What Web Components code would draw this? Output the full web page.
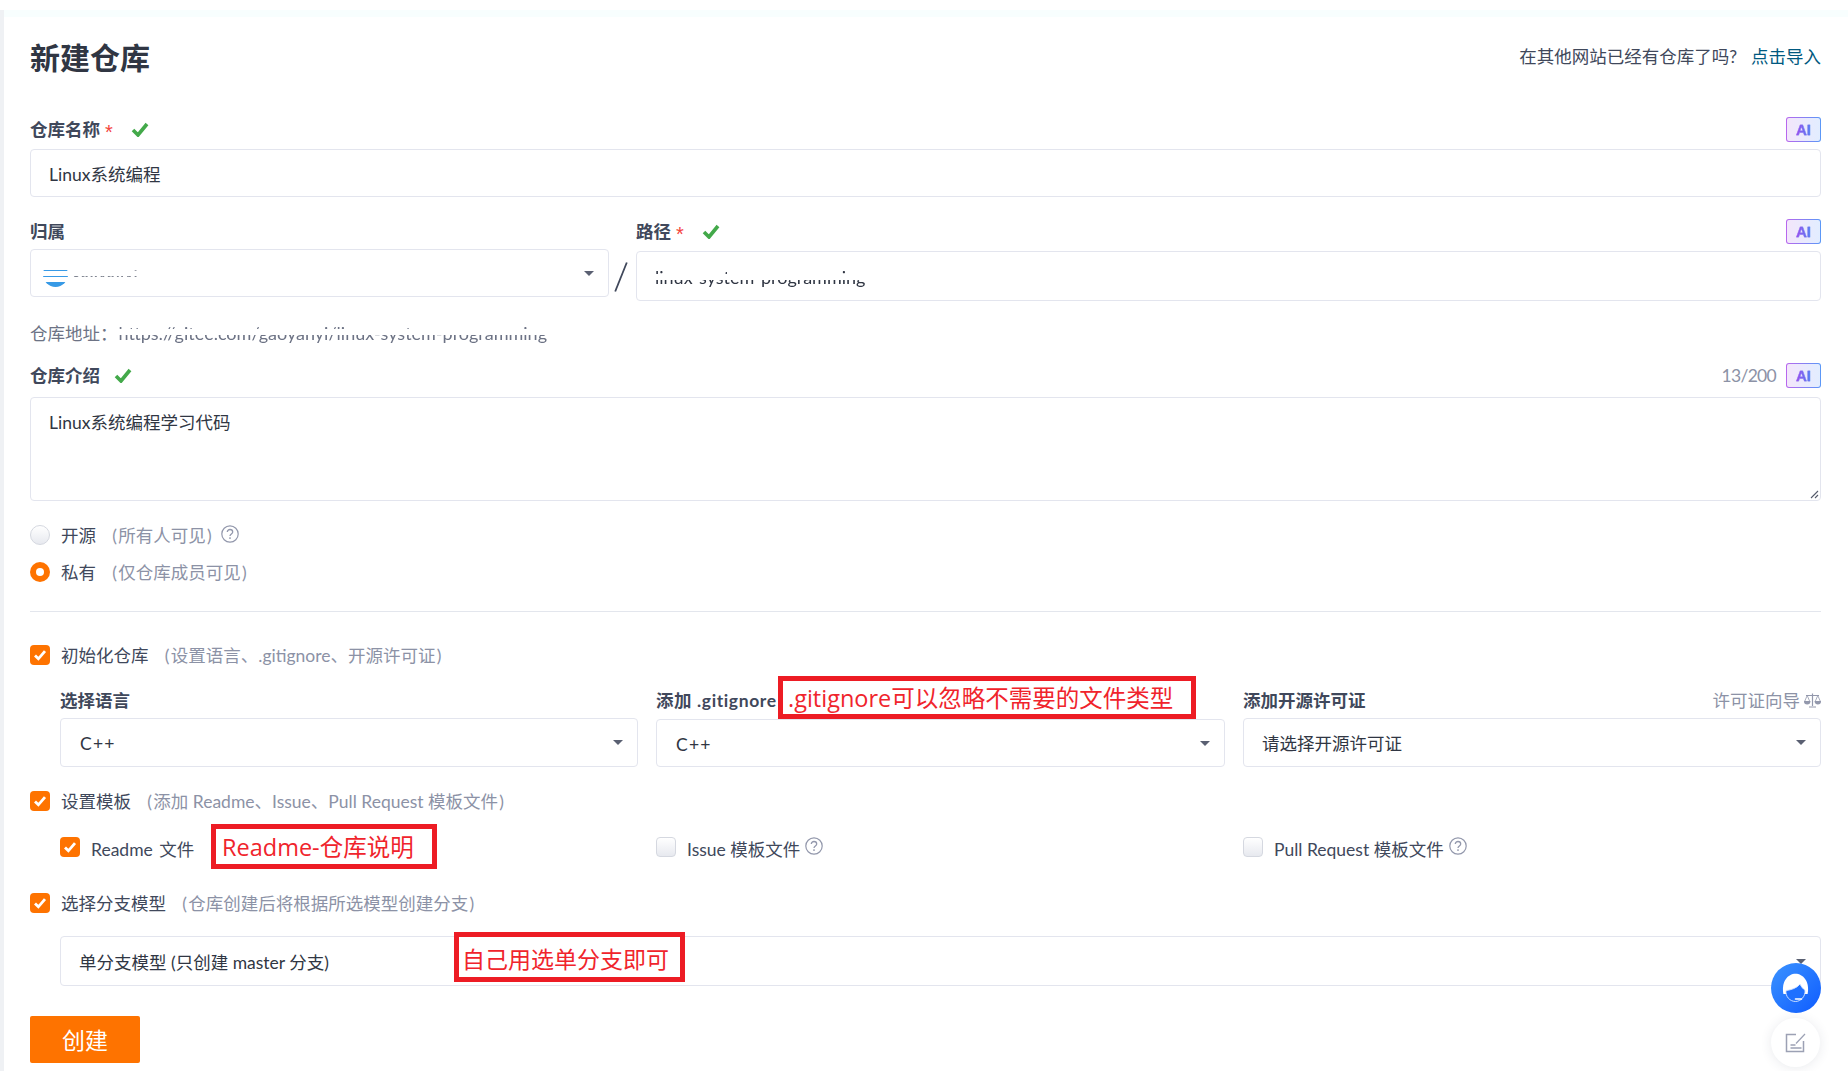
<!DOCTYPE html>
<html lang="zh-CN">
<head>
<meta charset="utf-8">
<title>新建仓库</title>
<style>
  html, body { margin: 0; background: #fff; }
  body { font: 17.5px/25px Lato, "Noto Sans CJK SC", "Noto Sans", sans-serif; color: #40485b; overflow: hidden; }
</style>
</head>
<body>
<app-shell>
  <new-repo-form></new-repo-form>
  <note-box style="left:778px;top:676px;width:418px;height:43px;font-size:23.5px;padding-left:5px">.gitignore可以忽略不需要的文件类型</note-box>
  <note-box style="left:211px;top:824px;width:226px;height:45px;font-size:23.5px">Readme-仓库说明</note-box>
  <note-box style="left:454px;top:932px;width:231px;height:50px;padding:3px 0 0 3px">自己用选单分支即可</note-box>
  <float-tools></float-tools>
</app-shell>

<script>
const CHECK_ICON = `<svg width="18" height="15" viewBox="0 0 18 15"><path d="M2 8l5 5 9-11" fill="none" stroke="#43a94a" stroke-width="3.6"/></svg>`;
const ARROW_ICON = `<svg width="10" height="5" viewBox="0 0 10 5"><path d="M0 0h10L5 5z" fill="#5a6072"/></svg>`;

class appShell extends HTMLElement {
  constructor() {
    super();
    this.shadowDOM = this.attachShadow({ mode: 'open' });
  }

  connectedCallback() {
    this.shadowDOM.innerHTML = `
    <style>
    :host { display: block; position: relative; height: 1071px; overflow: hidden; }
    .top { height: 10px; background: #fff; }
    .wrap { display: flex; height: 1061px; }
    .side { width: 4px; background: #eff1f4; }
    .main { flex: 1; min-width: 0; }
    .mint { height: 7px; background: #f8fefe; }
    .body { padding: 0 27px 0 26px; }
    </style>
    <div class="top"></div>
    <div class="wrap">
      <div class="side"></div>
      <div class="main">
        <div class="mint"></div>
        <div class="body"><slot></slot></div>
      </div>
    </div>`;
  }
}

class aiBadge extends HTMLElement {
  constructor() {
    super();
    this.shadowDOM = this.attachShadow({ mode: 'open' });
  }

  connectedCallback() {
    this.shadowDOM.innerHTML = `
    <style>
    :host { display: block; box-sizing: border-box; width: 35px; height: 25px; border: 1px solid transparent; border-radius: 3px;
      background: linear-gradient(90deg, #f3e6fb, #e2edff) padding-box, linear-gradient(90deg, #b967ee, #5a98f7) border-box; }
    div { display: flex; align-items: center; justify-content: center; height: 23px; }
    span { font: 700 15px/23px "Liberation Sans", sans-serif; -webkit-text-stroke: .3px #7d6cf0;
      background: linear-gradient(90deg, #a04cf0, #4a84f2); -webkit-background-clip: text; background-clip: text; color: transparent; }
    </style>
    <div><span>AI</span></div>`;
  }
}

class fieldLabel extends HTMLElement {
  constructor() {
    super();
    this.shadowDOM = this.attachShadow({ mode: 'open' });
  }

  connectedCallback() {
    const star = this.hasAttribute('required');
    this.shadowDOM.innerHTML = `
    <style>
    :host { display: flex; align-items: center; justify-content: space-between; height: 25px; }
    .left { display: flex; align-items: center; font-weight: 700; color: #40485b; }
    .star { position: relative; top: 3px; margin-left: 5px; color: #f4433c; font: 400 20px/25px "Liberation Sans", sans-serif; }
    svg { margin-left: ${star ? 18 : 14}px; }
    .end { display: flex; align-items: center; gap: 10px; }
    </style>
    <div class="left"><slot></slot>${star ? '<span class="star">*</span>' : ''}${this.hasAttribute('ok') ? CHECK_ICON : ''}</div>
    <div class="end"><slot name="end"></slot></div>`;
  }
}

class textBox extends HTMLElement {
  constructor() {
    super();
    this.shadowDOM = this.attachShadow({ mode: 'open' });
  }

  connectedCallback() {
    const select = this.hasAttribute('select');
    const multi = this.hasAttribute('multi');
    this.shadowDOM.innerHTML = `
    <style>
    :host { display: flex; position: relative; box-sizing: border-box; height: 48px; padding: ${multi ? '11px' : '0'} 14px 0 18px;
      align-items: ${multi ? 'flex-start' : 'center'}; justify-content: space-between;
      border: 1px solid #e3e5ee; border-radius: 4px; background: #fff; color: #303643; }
    .value { position: relative; top: 1px; }
    .grip { position: absolute; right: 1px; bottom: 1px; }
    </style>
    <div class="value"><slot></slot></div>
    ${select ? ARROW_ICON : ''}
    ${multi ? '<svg class="grip" width="9" height="9" viewBox="0 0 9 9"><path d="M1 8l7-7M5 8l3-3" stroke="#555b6b" stroke-width="1.1"/></svg>' : ''}`;
  }
}

class cutText extends HTMLElement {
  constructor() {
    super();
    this.shadowDOM = this.attachShadow({ mode: 'open' });
  }

  connectedCallback() {
    // the reference has these values smeared out in bands: a is the thin band, b the lower part
    const [a1, a2, b1, b2] = (this.getAttribute('bands') || '4,8,14,25').split(',');
    const mask = `linear-gradient(#0000 ${a1}px, #000 ${a1}px, #000 ${a2}px, #0000 ${a2}px, #0000 ${b1}px, #000 ${b1}px, #000 ${b2}px, #0000 ${b2}px)`;
    const line = this.getAttribute('line') || 25;
    this.shadowDOM.innerHTML = `
    <style>
    :host { display: inline-block; font-size: 18px; line-height: ${line}px; -webkit-mask-image: ${mask}; mask-image: ${mask}; }
    </style>
    <slot></slot>`;
  }
}

class ownerValue extends HTMLElement {
  constructor() {
    super();
    this.shadowDOM = this.attachShadow({ mode: 'open' });
  }

  connectedCallback() {
    const mask = 'linear-gradient(#0000 7.5px, #000 7.5px, #000 9.5px, #0000 9.5px, #0000 13.5px, #000 13.5px, #000 15.5px, #0000 15.5px, #0000 20px, #000 20px)';
    this.shadowDOM.innerHTML = `
    <style>
    :host { display: flex; align-items: center; gap: 5px; margin-left: -6px; height: 25px; -webkit-mask-image: ${mask}; mask-image: ${mask}; }
    i { display: block; width: 25px; height: 25px; border-radius: 50%; background: #379ae6; }
    span { font: 700 12px/25px "Open Sans", sans-serif; color: #555b6b; opacity: .75; letter-spacing: 1.5px; }
    </style>
    <i></i><span><slot></slot></span>`;
  }
}

class helpIcon extends HTMLElement {
  constructor() {
    super();
    this.shadowDOM = this.attachShadow({ mode: 'open' });
  }

  connectedCallback() {
    this.shadowDOM.innerHTML = `
    <style>
    :host { display: inline-flex; margin: -3px 0 0 5px; }
    </style>
    <svg width="18" height="18" viewBox="0 0 18 18" fill="none" stroke="#9398ac">
      <circle cx="9" cy="9" r="8.2" stroke-width="1.2"/>
      <path d="M6.3 7.100c0-1.600 1.200-2.600 2.700-2.600s2.700 1 2.700 2.400c0 2-2.700 2-2.700 4.100" stroke-width="1.3"/>
      <path d="M9 12.300v1.700" stroke-width="1.4"/>
    </svg>`;
  }
}

class checkRow extends HTMLElement {
  constructor() {
    super();
    this.shadowDOM = this.attachShadow({ mode: 'open' });
  }

  connectedCallback() {
    const on = this.hasAttribute('checked');
    const round = this.hasAttribute('radio');
    const hint = (this.getAttribute('hint') || '').replace('(', '<u>(</u>').replace(/\)$/, '<u>)</u>');
    let mark = '';
    if (on && round) mark = '<i></i>';
    if (on && !round) mark = '<svg width="14" height="12" viewBox="0 0 14 12"><path d="M2 6.400l3.400 3.400L12 2.200" fill="none" stroke="#fff" stroke-width="2.800"/></svg>';
    this.shadowDOM.innerHTML = `
    <style>
    :host { display: flex; align-items: center; height: 20px; color: #40485b; }
    .box { display: flex; align-items: center; justify-content: center; flex: none; box-sizing: border-box; width: 20px; height: 20px; margin-right: 11px;
      border-radius: ${round ? '50%' : '4px'}; }
    .off { border: 1px solid #d5d8e0; background: linear-gradient(#fff, #e7e9ef); }
    .on { background: #fe7300; }
    i { width: 8px; height: 8px; border-radius: 50%; background: #fff; }
    .txt { position: relative; top: var(--shift, 0px); white-space: nowrap; }
    .hint { margin-left: 15px; color: #8c92a6; }
    u { padding: 0 1.3px; text-decoration: none; }
    </style>
    <div class="box ${on ? 'on' : 'off'}">${mark}</div>
    <div class="txt"><slot></slot>${hint ? `<span class="hint">${hint}</span>` : ''}</div>
    <slot name="end"></slot>`;
  }
}

class noteBox extends HTMLElement {
  constructor() {
    super();
    this.shadowDOM = this.attachShadow({ mode: 'open' });
  }

  connectedCallback() {
    this.shadowDOM.innerHTML = `
    <style>
    :host { display: flex; align-items: center; position: absolute; box-sizing: border-box; padding-left: 6px; white-space: nowrap;
      border: 5px solid #ed1c24; background: #fff; color: #f0242c; font: 23px/30px "Open Sans", "Noto Sans CJK SC", sans-serif; }
    </style>
    <slot></slot>`;
  }
}

class floatTools extends HTMLElement {
  constructor() {
    super();
    this.shadowDOM = this.attachShadow({ mode: 'open' });
  }

  connectedCallback() {
    this.shadowDOM.innerHTML = `
    <style>
    :host { position: absolute; left: 1771px; top: 963px; display: flex; flex-direction: column; gap: 5px; }
    .chat { width: 50px; height: 50px; border-radius: 50%; background: linear-gradient(135deg, #3b93ff, #0f5cff); }
    .edit { display: flex; align-items: center; justify-content: center; width: 49px; height: 49px; border-radius: 50%; background: #fff; box-shadow: 0 1px 12px rgba(40, 50, 80, .1); }
    </style>
    <div class="chat">
      <svg width="50" height="50" viewBox="0 0 50 50">
        <path d="M12.400 31C10 18.500 17 10.800 24.500 10.800S39 18.500 36.600 31z" fill="#fff"/>
        <path d="M15 27.500c5-.5 11-2.500 14-6.500 1.500 3 3 5 5 6 .8 6-4 11.500-9.500 11.500S14.200 33.500 15 27.500z" fill="#1e70ff" stroke="#dbe9ff" stroke-width=".9"/>
        <path d="M24.500 36h6" stroke="#fff" stroke-width="1.600" stroke-linecap="round"/>
      </svg>
    </div>
    <div class="edit">
      <svg width="22" height="20" viewBox="0 0 22 20" fill="none" stroke="#9ca1b4" stroke-width="1.500">
        <path d="M11 1.500H1.500v17h17V8"/>
        <path d="M11 10.500l9-9.500" stroke-width="1.200"/>
        <path d="M5.500 12h5M5.500 15h11" stroke-width="1.300"/>
      </svg>
    </div>`;
  }
}

class newRepoForm extends HTMLElement {
  constructor() {
    super();
    this.shadowDOM = this.attachShadow({ mode: 'open' });
  }

  connectedCallback() {
    this.render();
  }

  render() {
    this.shadowDOM.innerHTML = `
    <style>
    :host { display: block; }
    .head { display: flex; align-items: center; justify-content: space-between; height: 36px; margin-top: 21px; }
    h1 { margin: 0; font: 700 30px/36px "Noto Sans CJK SC", sans-serif; color: #303643; }
    .import { color: #40485b; }
    .import a { margin-left: 14px; color: #005980; }
    .gap7 { margin-top: 7px; }
    .owner-row { display: grid; grid-template-columns: 579px 27px 1fr; margin-top: 22px; }
    .slash { padding: 43px 0 0 5px; }
    .address { height: 25px; margin-top: 20px; color: #6d7385; white-space: nowrap; }
    .address cut-text { margin-left: 1px; vertical-align: top; }
    hr { height: 1px; margin: 29px 0 0; border: 0; background: #e3e6ed; }
    .indent { margin-left: 30px; }
    .cols { display: grid; grid-template-columns: 578px 569px 1fr; column-gap: 18px; }
    .muted { color: #8c92a6; font-weight: 400; }
    .count { letter-spacing: -.7px; }
    .plus { margin-left: 1px; letter-spacing: 1.2px; }
    .files { --shift: 2px; }
    .create { display: block; width: 110px; height: 47px; margin-top: 30px; padding: 0; border: 0; border-radius: 2px; background: #fe7300; color: #fff; font: 23px/47px "Noto Sans CJK SC", sans-serif; }
    </style>

    <div class="head">
      <h1>新建仓库</h1>
      <div class="import">在其他网站已经有仓库了吗?<a>点击导入</a></div>
    </div>

    <field-label required ok style="margin-top:43px">仓库名称<ai-badge slot="end"></ai-badge></field-label>
    <text-box class="gap7">Linux系统编程</text-box>

    <div class="owner-row">
      <div>
        <field-label>归属</field-label>
        <text-box select style="margin-top:5px"><owner-value>gaoyanyi</owner-value></text-box>
      </div>
      <div class="slash">
        <svg width="14" height="30" viewBox="0 0 14 30"><path d="M12.800 0.500L1.200 29.500" stroke="#40485b" stroke-width="1.800"/></svg>
      </div>
      <div>
        <field-label required ok>路径<ai-badge slot="end"></ai-badge></field-label>
        <text-box class="gap7" style="height:50px"><cut-text bands="9,13,19,29" line="33">linux-system-programming</cut-text></text-box>
      </div>
    </div>

    <div class="address">仓库地址：<cut-text>https://gitee.com/gaoyanyi/linux-system-programming</cut-text></div>

    <field-label ok style="margin-top:17px">仓库介绍<span slot="end" class="muted count">13/200</span><ai-badge slot="end"></ai-badge></field-label>
    <text-box multi style="height:104px;margin-top:9px">Linux系统编程学习代码</text-box>

    <check-row radio hint="(所有人可见)" style="margin-top:24px">开源<help-icon slot="end" style="margin-left:8px"></help-icon></check-row>
    <check-row radio checked hint="(仅仓库成员可见)" style="margin-top:17px">私有</check-row>

    <hr>

    <check-row checked hint="(设置语言、.gitignore、开源许可证)" style="margin-top:33px">初始化仓库</check-row>

    <div class="cols indent" style="margin-top:23px">
      <div>
        <field-label>选择语言</field-label>
        <text-box select style="margin-top:5px;height:49px"><span class="plus">C++</span></text-box>
      </div>
      <div>
        <field-label><span style="letter-spacing:.6px">添加 .gitignore</span></field-label>
        <text-box select style="margin-top:6px"><span class="plus">C++</span></text-box>
      </div>
      <div>
        <field-label>添加开源许可证<span slot="end" class="muted" style="display:flex;align-items:center;gap:4px">许可证向导
          <svg width="17" height="15" viewBox="0 0 17 15" fill="none" stroke="#9398ac" stroke-width="1.200">
            <path d="M8.500 0.500v12.500M5 14h7M2 2.500h13"/>
            <path d="M0.600 8.500h5.200c0 3.200-5.200 3.200-5.200 0zM11.200 8.500h5.200c0 3.200-5.200 3.200-5.200 0z" fill="#9398ac"/>
            <path d="M3.200 2.500L0.600 8.500M3.200 2.500L5.800 8.500M13.800 2.500l-2.600 6M13.800 2.500l2.600 6" stroke-width=".8"/>
          </svg></span></field-label>
        <text-box select style="margin-top:5px;height:49px">请选择开源许可证</text-box>
      </div>
    </div>

    <check-row checked hint="(添加 Readme、Issue、Pull Request 模板文件)" style="margin-top:24px">设置模板</check-row>

    <div class="cols indent files" style="margin-top:26px">
      <check-row checked style="word-spacing:2px">Readme 文件</check-row>
      <check-row>Issue 模板文件<help-icon slot="end"></help-icon></check-row>
      <check-row>Pull Request 模板文件<help-icon slot="end"></help-icon></check-row>
    </div>

    <check-row checked hint="(仓库创建后将根据所选模型创建分支)" style="margin-top:36px">选择分支模型</check-row>
    <text-box select class="indent" style="height:50px;margin-top:23px">单分支模型 (只创建 master 分支)</text-box>

    <button class="create">创建</button>`;
  }
}

customElements.define('app-shell', appShell);
customElements.define('ai-badge', aiBadge);
customElements.define('field-label', fieldLabel);
customElements.define('text-box', textBox);
customElements.define('cut-text', cutText);
customElements.define('owner-value', ownerValue);
customElements.define('help-icon', helpIcon);
customElements.define('check-row', checkRow);
customElements.define('note-box', noteBox);
customElements.define('float-tools', floatTools);
customElements.define('new-repo-form', newRepoForm);
</script>
</body>
</html>
